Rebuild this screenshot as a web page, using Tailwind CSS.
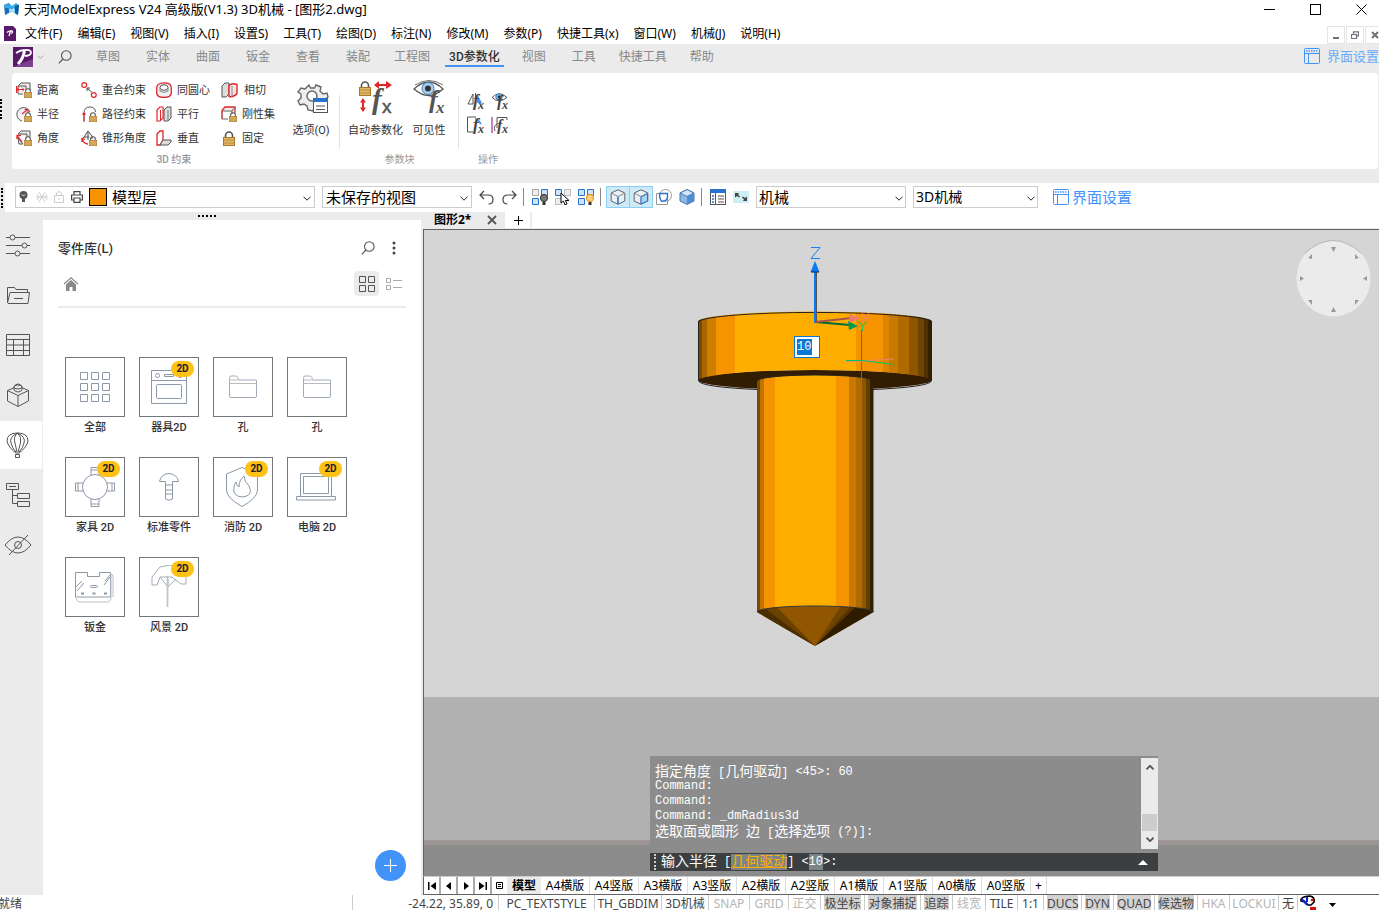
<!DOCTYPE html>
<html lang="zh-CN">
<head>
    <meta charset="UTF-8">
    <title>天河ModelExpress V24 高级版(V1.3) 3D机械 - [图形2.dwg]</title>
    <script src="https://cdn.jsdelivr.net/npm/@tailwindcss/browser@4"></script>
</head>
<body class="h-screen overflow-hidden flex flex-col bg-[#ebebeb] text-black text-xs font-['Noto_Sans','Noto_Sans_CJK_SC',sans-serif]">

<!-- Símbolos compartidos -->
<svg class="hidden">
    <symbol id="lock" viewBox="0 0 12 15">
        <path d="M2.500 7V4.500a3.500 3.500 0 0 1 7 0V7" fill="none" stroke="#555" stroke-width="1.600"/>
        <rect x="0.500" y="6.500" width="11" height="8" fill="#e3b665" stroke="#a8782c"/>
        <path d="M1 9h10M1 12h10" stroke="#b98a3f"/>
    </symbol>
    <symbol id="layout" viewBox="0 0 16 16">
        <g fill="none" stroke="#4293f8"><rect x="0.500" y="0.500" width="15" height="15" rx="1"/><path d="M0.500 5.500h15M4.500 5.500v10"/><path d="M2 3h12" stroke-width="1.500" stroke-dasharray="1.500 1"/></g>
    </symbol>
    <symbol id="search" viewBox="0 0 14 14">
        <g fill="none" stroke="#555" stroke-width="1.100"><circle cx="8.300" cy="5.500" r="4.800"/><path d="M5 9 .8 13.300"/></g>
    </symbol>
    <symbol id="chev" viewBox="0 0 8 5">
        <path d="M.5.700 4 4.200 7.500.700" fill="none" stroke="#222"/>
    </symbol>
    <symbol id="arrow" viewBox="0 0 8 5">
        <path d="M.5.700 4 4.200 7.500.700" fill="none" stroke="#555" stroke-width="1.800"/>
    </symbol>
    <symbol id="folder" viewBox="0 0 30 24">
        <g fill="none" stroke="#a3acba"><path d="M1.500 3.500V21q0 1.500 1.500 1.500h24q1.500 0 1.500-1.500V5H10V2.500Q9 .8 7.500 1H3Q1.500 1 1.500 3.500Z"/><path d="M2 8.500h26M2 5h7" stroke="#bbb"/></g>
    </symbol>
    <symbol id="box" viewBox="0 0 16 16">
        <path d="M8 .8 14.800 4v8L8 15.300 1.200 12V4Z" fill="#e8f1f5" stroke="#666"/>
        <path d="M8 8v7M1.500 4.300 8 7.500l6.500-3.200" fill="none" stroke="#888"/>
    </symbol>
</svg>

<!-- Barra de título -->
<header class="bg-white h-[22px] flex items-center pl-1 pr-3 shrink-0">
    <svg class="w-4 h-3 mr-1 -mt-1" viewBox="0 0 16 12"><path d="M0 2 5 0v10L1 12Z" fill="#1b6fb8"/><path d="M0 2 5 0l3 3 4-3 3 2-1 10-4-2V5L8 7 4 5 1 5Z" fill="#38a8e8"/><path d="m11 3 4-1-1 10-3-2Z" fill="#0c5a9c"/><path d="m5 6 3 2 3-2v4L8 9l-3 1Z" fill="#8cd0f5"/></svg>
    <h1 class="text-[13px] leading-[18px] -mt-1 whitespace-nowrap">天河ModelExpress V24 高级版(V1.3) 3D机械 - [图形2.dwg]</h1>
    <div class="ml-auto flex items-center gap-[35px] -mt-1">
        <button aria-label="最小化"><svg class="w-[11px] h-[11px]" viewBox="0 0 11 11"><path d="M0 5.500h11" stroke="#000"/></svg></button>
        <button aria-label="最大化"><svg class="w-[11px] h-[11px]" viewBox="0 0 11 11"><rect x="0.500" y="0.500" width="10" height="10" fill="none" stroke="#000"/></svg></button>
        <button aria-label="关闭"><svg class="w-[11px] h-[11px]" viewBox="0 0 11 11"><path d="m.5.500 10 10m0-10-10 10" stroke="#000"/></svg></button>
    </div>
</header>

<!-- Menú -->
<nav class="bg-white h-[22px] flex items-center pl-1 shrink-0 whitespace-nowrap overflow-hidden">
    <svg class="w-3 h-[15px] mr-[9px] shrink-0" viewBox="0 0 12 15"><path d="M0 0h9l3 3v12H0Z" fill="#571a68"/><path d="M3 6.500q2-2 5-1.500 1.500 1.500-1 2.500M6.500 5 5 10" fill="none" stroke="#fff" stroke-width="1.300"/></svg>
    <div class="flex gap-[15px] pt-0.5">
        <button>文件(F)</button>
        <button>编辑(E)</button>
        <button>视图(V)</button>
        <button>插入(I)</button>
        <button>设置S)</button>
        <button>工具(T)</button>
        <button>绘图(D)</button>
        <button>标注(N)</button>
        <button>修改(M)</button>
        <button>参数(P)</button>
        <button>快捷工具(x)</button>
        <button>窗口(W)</button>
        <button>机械(J)</button>
        <button>说明(H)</button>
    </div>
    <div class="ml-auto flex gap-px mt-1">
        <button class="w-[18px] h-[18px] border border-[#e4e4e4] flex items-center justify-center" aria-label="最小化文档"><svg class="w-2 h-2" viewBox="0 0 8 8"><path d="M1 7h6" stroke="#6d7278" stroke-width="2"/></svg></button>
        <button class="w-[18px] h-[18px] border border-[#e4e4e4] flex items-center justify-center" aria-label="还原文档"><svg class="w-2 h-2" viewBox="0 0 8 8"><path d="M2.500 3V.8h5v4H6M.5 3.500h5v4h-5Z" fill="none" stroke="#6d7278" stroke-width="1.200"/></svg></button>
        <button class="w-[14px] h-[18px] border border-r-0 border-[#e4e4e4] flex items-center justify-end" aria-label="关闭文档"><svg class="w-2 h-2" viewBox="0 0 8 8"><path d="m1 1 6 6m0-6L1 7" stroke="#6d7278" stroke-width="2"/></svg></button>
    </div>
</nav>

<!-- Pestañas de la cinta -->
<div class="h-[29px] flex items-center pl-[13px] pb-1 shrink-0 text-[#888] whitespace-nowrap">
    <svg class="w-5 h-5 shrink-0" viewBox="0 0 20 20"><rect width="20" height="20" fill="#571a68"/><path d="M0 20 20 12v8Z" fill="#7d3f91"/><path d="M3 6q4-3 9-3 6-.5 6 2.500 0 3-6 3.500" fill="none" stroke="#fff" stroke-width="1.800"/><path d="M11.500 4Q10 12 5 17" fill="none" stroke="#fff" stroke-width="3"/></svg>
    <svg class="w-[7px] h-1 ml-1 opacity-40 shrink-0"><use href="#chev"/></svg>
    <button class="mx-3.5" aria-label="搜索"><svg class="w-[14px] h-[14px] block"><use href="#search"/></svg></button>
    <div class="flex h-full pt-px -ml-[3px]">
        <button class="px-[13px]">草图</button>
        <button class="px-[13px]">实体</button>
        <button class="px-[13px]">曲面</button>
        <button class="px-[13px]">钣金</button>
        <button class="px-[13px]">查看</button>
        <button class="px-[13px]">装配</button>
        <button class="pl-[11px] pr-[10px]">工程图</button>
        <button class="px-1 mx-[5px] relative text-[#333] font-medium after:absolute after:inset-x-0 after:top-5 after:h-0.5 after:bg-[#4293f8] font-['Roboto','Noto_Sans_CJK_SC',sans-serif]">3D参数化</button>
        <button class="px-[13px]">视图</button>
        <button class="px-[13px]">工具</button>
        <button class="px-[10px]">快捷工具</button>
        <button class="px-[13px]">帮助</button>
    </div>
    <button class="ml-auto flex items-center gap-[7px] text-[13px] text-[#6aabf9]"><svg class="w-4 h-4"><use href="#layout"/></svg>界面设置</button>
</div>

<!-- Cinta -->
<section class="flex shrink-0 items-center">
    <span class="w-0.5 h-5 -mt-6 mr-2.5 border-l-2 border-dotted border-black"></span>
    <div class="flex-1 h-24 mr-px bg-white rounded flex pl-1 text-[11px] text-[#333] whitespace-nowrap font-['Roboto','Noto_Sans_CJK_SC',sans-serif]">
        <div class="w-[272px] flex flex-col pt-[5px]">
            <div class="grid grid-cols-[65px_75px_65px_64px] auto-rows-[24px] h-[72px]">
                <button class="flex items-center gap-[5px]">
                    <svg class="w-4 h-4" viewBox="0 0 16 16"><path d="M2 4 5 1h9v7M2 4h8v3M2 12h5M2 4v8" fill="#eee" stroke="#555"/><path d="M.5 4v7M1 7.500h7M3 5.500l-2 2 2 2M6 5.500l2 2-2 2" fill="none" stroke="#e0262b"/><use href="#lock" x="8" y="6" width="8" height="10"/></svg><span class="pt-0.5">距离</span></button>
                <button class="flex items-center gap-[5px]">
                    <svg class="w-4 h-4" viewBox="0 0 16 16"><g fill="#fff" stroke="#e0262b" stroke-width="1.200"><circle cx="3.200" cy="3" r="2.400"/><circle cx="12.800" cy="13" r="2.400"/></g><path d="m6 6 5 4.500M6 9V6h3" fill="none" stroke="#444"/></svg><span class="pt-0.5">重合约束</span></button>
                <button class="flex items-center gap-[5px]">
                    <svg class="w-4 h-4" viewBox="0 0 16 16"><path d="M.7 5.500Q1 1 8 .8t7.300 4.700v6q-1 4-7.300 4t-7.300-4Z" fill="#eee" stroke="#e0262b" stroke-width="1.300"/><ellipse cx="8" cy="5.500" rx="4" ry="2.800" fill="#fff" stroke="#555"/><path d="M4 6v3q4 3 8 0V6" fill="none" stroke="#888"/></svg><span class="pt-0.5">同圆心</span></button>
                <button class="flex items-center gap-[5px]">
                    <svg class="w-[18px] h-4" viewBox="0 0 18 16"><path d="M1 4 4 1h4v11l-3 3H1Z" fill="#ddd" stroke="#555"/><path d="M8 3.500Q11 .5 16 2.500v9q-3 4-8 3Z" fill="#f5e5e5" stroke="#e0262b" stroke-width="1.400"/><path d="M11 4v11" stroke="#888"/></svg><span class="pt-0.5">相切</span></button>

                <button class="flex items-center gap-[5px]">
                    <svg class="w-4 h-4" viewBox="0 0 16 16"><path d="M6 15A6.800 6.800 0 1 1 14 6" fill="#f3f3f3" stroke="#555"/><path d="m6 8 5-4M8.500 3.500H12V7" fill="none" stroke="#e0262b" stroke-width="1.200"/><use href="#lock" x="8" y="6" width="8" height="10"/></svg><span class="pt-0.5">半径</span></button>
                <button class="flex items-center gap-[5px]">
                    <svg class="w-4 h-4" viewBox="0 0 16 16"><path d="M3 15V7q0-6 6-6 5 0 5.500 5" fill="none" stroke="#555"/><path d="M3 10v6" stroke="#e0262b"/><circle cx="3" cy="8" r="1.600" fill="#e0262b"/><use href="#lock" x="8" y="6" width="8" height="10"/></svg><span class="pt-0.5">路径约束</span></button>
                <button class="flex items-center gap-[5px]">
                    <svg class="w-4 h-4" viewBox="0 0 16 16"><path d="M1 4 4 1h3v11l-3 3H1Z" fill="#fff" stroke="#e0262b" stroke-width="1.200"/><path d="M4.500 4v10" stroke="#e0262b"/><path d="M8 4l3-3h4v11l-3 3H8Z" fill="#ddd" stroke="#555"/><path d="M12 4v10" stroke="#777"/></svg><span class="pt-0.5">平行</span></button>
                <button class="flex items-center gap-[5px]">
                    <svg class="w-4 h-4" viewBox="0 0 16 16"><path d="M1 4.500 4 1h10v6" fill="#eee" stroke="#e0262b" stroke-width="1.300"/><path d="M1 5h10v3M1 5v8h6M11 5l3-4" fill="none" stroke="#666"/><path d="M1 4v9" stroke="#e0262b"/><use href="#lock" x="8" y="6" width="8" height="10"/></svg><span class="pt-0.5">刚性集</span></button>

                <button class="flex items-center gap-[5px]">
                    <svg class="w-4 h-4" viewBox="0 0 16 16"><path d="M2 4 5 1h9v6M2 4h9v3M3 14h4L2 8Z" fill="#eee" stroke="#555"/><path d="m1 6 5 6M1 9V5.500h4" fill="none" stroke="#e0262b" stroke-width="1.300"/><use href="#lock" x="8" y="6" width="8" height="10"/></svg><span class="pt-0.5">角度</span></button>
                <button class="flex items-center gap-[5px]">
                    <svg class="w-4 h-4" viewBox="0 0 16 16"><path d="M1 10 7 1l4 5v3M3 7h5M7 1v9" fill="#eee" stroke="#555"/><path d="M1 9q2 5 6 5M1 12V8.500l3 1" fill="none" stroke="#e0262b" stroke-width="1.300"/><use href="#lock" x="8" y="6" width="8" height="10"/></svg><span class="pt-0.5">锥形角度</span></button>
                <button class="flex items-center gap-[5px]">
                    <svg class="w-4 h-4" viewBox="0 0 16 16"><path d="M1 4 4 1h3v9l-3 5H1Z" fill="#fff" stroke="#e0262b" stroke-width="1.300"/><path d="M4 15l3-5h8v2l-3 3Z" fill="#ddd" stroke="#555"/></svg><span class="pt-0.5">垂直</span></button>
                <button class="flex items-center gap-[5px]">
                    <svg class="w-4 h-[15px]"><use href="#lock"/></svg><span class="pt-0.5">固定</span></button>
            </div>
            <p class="mt-0.5 pl-11 text-center text-[10px] leading-4 font-medium text-[#999]">3D 约束</p>
        </div>
        <button class="w-[46px] flex flex-col items-center pt-[10px] gap-2">
            <svg class="w-8 h-8 ml-1" viewBox="0 0 32 32"><path d="m12 2 1.500 3h4L19 2l5 2-1 4 3 3 4-1 1 4-4 3-2 6-4-1-4 3-1 3-5-1-1-4-3-2-4 1-2-4 3-3v-4L1 9l3-4 4 1Z" fill="#eee" stroke="#666" stroke-width="1.400"/><circle cx="15" cy="13" r="5" fill="#fff" stroke="#666" stroke-width="1.400"/><rect x="16.500" y="15.500" width="14" height="14" fill="#fff" stroke="#555"/><path d="M16 15h15v4H16Z" fill="#2672cd"/><path d="M19 23h9M19 26.500h9" stroke="#555"/></svg>
            <span class="pt-px">选项(O)</span>
        </button>
        <span class="w-px h-[54px] mt-[22px] mx-[5px] bg-[#e3e3e3]"></span>
        <div class="w-[109px] flex flex-col">
            <div class="flex gap-2 pl-[3px] pt-[7px] h-[77px]">
                <button class="flex flex-col items-center gap-[7px]">
                    <svg class="w-9 h-[37px]" viewBox="0 0 36 37"><use href="#lock" x="1" y="1" width="12" height="15"/><g fill="#e0262b"><path d="m16 5 5-4v3h7V1l6 4-6 4V6h-7v3ZM5 18l3 4.500H6v5h2L5 32l-3-4.500h2v-5H2Z"/></g><text x="14" y="29" font-family="Liberation Serif" font-style="italic" font-weight="bold" font-size="29" fill="#555">f</text><text x="24" y="33" font-family="Liberation Sans" font-size="19" stroke="#555" stroke-width="0.500" fill="#555">x</text></svg>
                    <span>自动参数化</span>
                </button>
                <button class="flex flex-col items-center gap-[7px]">
                    <svg class="w-9 h-[37px]" viewBox="0 0 36 37"><path d="M3 9Q18-5 32 9 18 22 3 9Z" fill="#fff" stroke="#555" stroke-width="1.300"/><path d="M4 5Q18-4 32 5" fill="none" stroke="#777"/><circle cx="17" cy="8.500" r="6" fill="#a9cff0" stroke="#3b7fc1"/><circle cx="17" cy="8.500" r="3" fill="#333"/><text x="18" y="28" font-family="Liberation Serif" font-style="italic" font-weight="bold" font-size="26" fill="#555">f</text><text x="25" y="33" font-family="Liberation Serif" font-style="italic" font-weight="bold" font-size="17" fill="#555">x</text></svg>
                    <span>可见性</span>
                </button>
            </div>
            <p class="text-center text-[10px] leading-4 mt-0.5 text-[#999]">参数块</p>
        </div>
        <span class="w-px h-[54px] mt-[22px] mx-1 bg-[#e3e3e3]"></span>
        <div class="flex flex-col pl-1">
            <div class="grid grid-cols-[24px_18px] gap-y-1.5 h-[77px] pt-[19px] auto-rows-[18px]">
                <button aria-label="镜像参数"><svg class="w-[18px] h-[18px]" viewBox="0 0 18 18"><path d="M1 12 6 2v10Z" fill="#fff" stroke="#555"/><path d="M8.500 1v12" stroke="#555"/><path d="m10 2 5 9h-5Z" fill="#4293f8"/><text x="6" y="14" font-family="Liberation Serif" font-style="italic" font-weight="bold" font-size="17" fill="#444">f</text><text x="11" y="17" font-family="Liberation Serif" font-style="italic" font-weight="bold" font-size="12" fill="#444">x</text></svg></button>
                <button aria-label="参数可见性"><svg class="w-[18px] h-[18px]" viewBox="0 0 18 18"><path d="M1 5.500Q8-2 16 5.500 8 12 1 5.500Z" fill="#fff" stroke="#555"/><circle cx="8" cy="5" r="3.200" fill="#8fc0ec" stroke="#3b7fc1"/><circle cx="8" cy="5" r="1.400" fill="#333"/><text x="6" y="15" font-family="Liberation Serif" font-style="italic" font-weight="bold" font-size="16" fill="#444">f</text><text x="11" y="17" font-family="Liberation Serif" font-style="italic" font-weight="bold" font-size="12" fill="#444">x</text></svg></button>
                <button aria-label="拉伸参数"><svg class="w-[18px] h-[18px]" viewBox="0 0 18 18"><path d="M9 1H.5v15H6" fill="none" stroke="#555"/><path d="M8.500 2v12" stroke="#4293f8" stroke-dasharray="1.500 1.500"/><path d="m10 3 4 5" stroke="#4293f8" stroke-width="2"/><text x="6" y="14" font-family="Liberation Serif" font-style="italic" font-weight="bold" font-size="17" fill="#444">f</text><text x="11" y="17" font-family="Liberation Serif" font-style="italic" font-weight="bold" font-size="12" fill="#444">x</text></svg></button>
                <button aria-label="旋转参数"><svg class="w-[18px] h-[18px]" viewBox="0 0 18 18"><path d="M1 1v16" stroke="#a3419f" stroke-width="1.300"/><path d="M6 12V1.500h10V4M4 15q-2-5 2-7" fill="none" stroke="#555"/><text x="6" y="15" font-family="Liberation Serif" font-style="italic" font-weight="bold" font-size="16" fill="#444">f</text><text x="11" y="17" font-family="Liberation Serif" font-style="italic" font-weight="bold" font-size="12" fill="#444">x</text></svg></button>
            </div>
            <p class="text-center text-[10px] leading-4 mt-0.5 text-[#999]">操作</p>
        </div>
    </div>
</section>

<!-- Barra de herramientas -->
<section class="mt-3.5 h-[29px] shrink-0 flex">
    <span class="w-[5px] flex items-center"><span class="ml-px h-5 border-l-2 border-dotted border-black"></span></span>
    <div class="flex-1 bg-white flex items-center pl-2.5 pb-px text-[15px] font-['Noto_Sans','Noto_Sans_CJK_SC',sans-serif]">
        <div class="relative w-[300px] h-[22px] border border-[#ccc] flex items-center pl-[3px]">
            <svg class="w-[9px] h-3" viewBox="0 0 9 12"><circle cx="4.500" cy="4" r="4" fill="#555"/><path d="M3 7h3v4H3Z" fill="#555"/><path d="M3 3.500 4.500 5 6 3.500" stroke="#fff" fill="none"/></svg>
            <svg class="w-3 h-3 ml-2" viewBox="0 0 12 12"><path d="M0 6h12M3 1l6 10M9 1 3 11M1 3l2 3-2 3M11 3 9 6l2 3" fill="none" stroke="#ccc"/></svg>
            <svg class="w-[10px] h-3 ml-1.5" viewBox="0 0 10 12"><path d="M.5 4.500h9v7h-9ZM2.500 4.500V2q2.500-3 5 0v2.500M5 7v2" fill="none" stroke="#ccc"/></svg>
            <svg class="w-3 h-3 ml-[7px]" viewBox="0 0 12 12"><path d="M3 4V.6h6V4M3 9H.6V4h10.800v5H9M3 7h6v4.400H3Z" fill="none" stroke="#444" stroke-width="1.200"/></svg>
            <span class="ml-1.5 w-[18px] h-[18px] bg-[#f59300] border border-black"></span>
            <select aria-label="图层" class="appearance-none flex-1 h-full pl-[5px] pb-0.5 bg-transparent outline-none"><option>模型层</option></select>
            <svg class="absolute right-[3px] top-[9px] w-2 h-[5px] pointer-events-none"><use href="#chev"/></svg>
        </div>
        <div class="relative ml-[7px] w-[150px] h-[22px]">
            <select aria-label="视图" class="appearance-none w-full h-full border border-[#ccc] pl-[3px] pb-0.5 bg-white outline-none"><option>未保存的视图</option></select>
            <svg class="absolute right-1 top-2.5 w-2 h-[5px] pointer-events-none"><use href="#chev"/></svg>
        </div>
        <div class="flex items-center gap-2 ml-[7px]">
            <button aria-label="撤销"><svg class="w-[15px] h-4 block" viewBox="0 0 15 16"><path d="M5 2 1 6l4 4M1 6h8q5 0 5 4.500T9.500 15" fill="none" stroke="#444" stroke-width="1.200"/></svg></button>
            <button aria-label="重做"><svg class="w-[15px] h-4 block" viewBox="0 0 15 16"><path d="m10 2 4 4-4 4M14 6H6Q1 6 1 10.500T5.500 15" fill="none" stroke="#444" stroke-width="1.200"/></svg></button>
        </div>
        <span class="w-px h-[18px] ml-1.5 mr-2 bg-[#888]"></span>
        <div class="flex items-center gap-[7px]">
            <button aria-label="隐藏实体"><svg class="w-4 h-4 block" viewBox="0 0 16 16"><rect x="0.500" y="0.500" width="6" height="6" fill="#eee" stroke="#aaa"/><path d="M9.500.500h6v6h-6ZM.500 9.500h6v6h-6Z" fill="#cfe3f8" stroke="#2672cd"/><circle cx="12" cy="9" r="3.600" fill="#777" stroke="#333"/><path d="M10.500 13h3v3h-3Z" fill="#333"/></svg></button>
            <button aria-label="选择显示"><svg class="w-4 h-4 block" viewBox="0 0 16 16"><path d="M.500.500h6v6h-6Z" fill="#cfe3f8" stroke="#2672cd"/><path d="M9.500.500h6v6h-6ZM.500 9.500h6v6h-6Z" fill="#eee" stroke="#bbb"/><path d="M6 4v10l2.500-2 1.500 4 2-1-1.500-3.500H14Z" fill="#fff" stroke="#000"/></svg></button>
            <button aria-label="显示全部"><svg class="w-4 h-4 block" viewBox="0 0 16 16"><path d="M.500.500h6v6h-6ZM9.500.500h6v6h-6ZM.500 9.500h6v6h-6Z" fill="#cfe3f8" stroke="#2672cd"/><circle cx="12" cy="9" r="3.600" fill="#ffd27a" stroke="#d98a12"/><path d="M10.500 13h3v3h-3Z" fill="#333"/></svg></button>
        </div>
        <span class="w-px h-[18px] ml-1.5 mr-[5px] bg-[#888]"></span>
        <button class="w-6 h-[22px] bg-[#cdeaf8] border border-[#8ccdf2] flex items-center justify-center" aria-label="线框"><svg class="w-4 h-4" viewBox="0 0 16 16"><use href="#box" width="16" height="16"/><path d="M8 8v7" stroke="#2672cd" stroke-width="1.300"/></svg></button>
        <button class="w-6 h-[22px] -ml-px bg-[#cdeaf8] border border-[#8ccdf2] flex items-center justify-center" aria-label="边着色"><svg class="w-4 h-4" viewBox="0 0 16 16"><use href="#box" width="16" height="16"/><path d="m8 8 6.500-3.500V12L8 15Z" fill="#a9d2f5" stroke="#2672cd"/></svg></button>
        <button class="ml-[3px]" aria-label="隐藏线"><svg class="w-4 h-4 block" viewBox="0 0 16 16"><circle cx="9.500" cy="6.500" r="6" fill="#fff" stroke="#999"/><path d="M.500 4.500h11v11H.500Z" fill="none" stroke="#999"/><path d="M3.500 4.500h8V9q-2 4-6 3-2-2-2-7.500Z" fill="#fff" stroke="#2672cd" stroke-width="1.400"/></svg></button>
        <button class="ml-[7px]" aria-label="着色"><svg class="w-4 h-4 block" viewBox="0 0 16 16"><path d="M8 .5 15 4v8l-7 3.500L1 12V4Z" fill="#8db9e4" stroke="#4478b0"/><path d="M8 .5 15 4 8 7.500 1 4Z" fill="#d2e6f8" stroke="#4478b0"/><path d="M8 7.500 15 4v8l-7 3.500Z" fill="#4f8dd0"/></svg></button>
        <span class="w-px h-[18px] ml-1.5 mr-2 bg-[#888]"></span>
        <button aria-label="属性面板"><svg class="w-4 h-4 block" viewBox="0 0 16 16"><rect x="0.500" y="0.500" width="15" height="15" fill="#fff" stroke="#555"/><path d="M0 0h16v4H0Z" fill="#2672cd"/><path d="M5.500 4v12M8 7h6M8 10h6M8 13h6" stroke="#555"/><path d="M3 6v9" stroke="#2672cd" stroke-width="1.500" stroke-dasharray="2 1"/></svg></button>
        <button class="ml-[7px] w-4 h-3 bg-[#cdeef5]" aria-label="全屏"><svg class="w-4 h-3 block" viewBox="0 0 16 12"><path d="M2 2h4L5 3.500 7 5.500 6 6.500 4 5 2 6.500ZM14 10h-4l1-1.500-2-2L10 5.500 12 7l2-1.500Z" fill="#444"/></svg></button>
        <div class="relative ml-[7px] w-[150px] h-[22px]">
            <select aria-label="工作空间" class="appearance-none w-full h-full border border-[#ccc] pl-0.5 pb-0.5 bg-white outline-none"><option>机械</option></select>
            <svg class="absolute right-[3px] top-2.5 w-2 h-[5px] pointer-events-none"><use href="#chev"/></svg>
        </div>
        <div class="relative ml-[7px] w-[125px] h-[22px]">
            <select aria-label="界面" class="appearance-none w-full h-full border border-[#ccc] pl-0.5 bg-white outline-none text-sm"><option>3D机械</option></select>
            <svg class="absolute right-[3px] top-2.5 w-2 h-[5px] pointer-events-none"><use href="#chev"/></svg>
        </div>
        <button class="ml-[15px] flex items-center gap-[3px] text-[#4293f8]"><svg class="w-4 h-4"><use href="#layout"/></svg>界面设置</button>
    </div>
</section>

<div class="flex-1 flex min-h-0">
    <!-- Barra lateral -->
    <aside class="w-[43px] shrink-0 pt-2 flex flex-col">
        <button class="h-[50px] pl-1.5" aria-label="参数"><svg class="w-6 h-6" viewBox="0 0 24 24"><g fill="#ebebeb" stroke="#555"><path d="M0 4.500h24M0 12.500h24M0 20.500h24"/><circle cx="6.500" cy="4.500" r="2.500"/><circle cx="18.500" cy="12.500" r="2.500"/><circle cx="11.500" cy="20.500" r="2.500"/></g></svg></button>
        <button class="h-[50px] pl-1.5" aria-label="文件夹"><svg class="w-6 h-6" viewBox="0 0 24 24"><path d="M1.500 20V4.500h7l1.500 2h11.500V9M1.500 20 4 9.500h19.500L22 20.500H2M8 15.500h9" fill="none" stroke="#555"/></svg></button>
        <button class="h-[50px] pl-1.5" aria-label="表格"><svg class="w-6 h-6" viewBox="0 0 24 24"><path d="M.500 1.500h23v21H.500ZM.500 6.500h23M.500 12h23M.500 17.500h23M7.500 6.500v16M17.500 6.500v16" fill="none" stroke="#555"/></svg></button>
        <button class="h-[50px] pl-1.5" aria-label="实体"><svg class="w-6 h-6" viewBox="0 0 24 24"><path d="m12 3 10.500 4.500v10.500L12 23.500 1.500 18V7.500ZM1.500 7.500 12 12.500l10.500-5M12 12.500v11" fill="none" stroke="#555"/><path d="M8 3.500q4-5 8 0v3.500q-4 4-8 0Z" fill="#ebebeb" stroke="#555"/><ellipse cx="12" cy="4" rx="4" ry="2" fill="none" stroke="#555"/></svg></button>
        <button class="h-12 my-px w-[42px] pl-1.5 bg-white" aria-label="零件库"><svg class="w-6 h-[26px]" viewBox="0 0 24 26"><path d="M11.500 1Q22 1 22 9q-1 6-9 12h-3Q2 15 1 9 1 1 11.500 1ZM11.500 1Q3 5 5 11q1 5 5 9M11.500 1Q20 5 18 11q-1 5-5 9M11.500 1Q7 5 9 11l2 9M11.500 1Q16 5 14.500 11L12 20M9.500 22.500h4v3h-4Z" fill="none" stroke="#555"/></svg></button>
        <button class="h-[50px] pl-1.5" aria-label="结构树"><svg class="w-6 h-6" viewBox="0 0 24 24"><path d="M.500.500h12v6H.500ZM3 3.500h7M6.500 6.500v14h5M6.500 12.500h5M11.500 10.500h12v5h-12ZM11.500 18.500h12v5h-12Z" fill="none" stroke="#555"/></svg></button>
        <button class="h-[50px] pl-1" aria-label="隐藏"><svg class="w-7 h-6" viewBox="0 0 28 24"><path d="M1 12Q14-4 27 12 14 28 1 12ZM24 2 5 22" fill="none" stroke="#555"/><circle cx="14" cy="12" r="3.500" fill="none" stroke="#555"/></svg></button>
    </aside>

    <!-- Biblioteca de piezas -->
    <section class="w-[378px] shrink-0 flex flex-col text-[#333] font-['Roboto','Noto_Sans_CJK_SC',sans-serif]">
        <div class="h-2 pl-[155px] flex items-center"><span class="w-[18px] border-t-2 border-dotted border-black"></span></div>
        <div class="relative flex-1 bg-white px-[15px] pt-4">
            <div class="flex items-center h-6">
                <h2 class="text-[13px] font-medium pt-0.5">零件库(L)</h2>
                <button class="ml-auto" aria-label="搜索零件"><svg class="w-[14px] h-[14px] block"><use href="#search"/></svg></button>
                <button class="ml-[17px] mr-2.5" aria-label="更多"><svg class="w-1 h-[14px] block" viewBox="0 0 4 14"><g fill="#444"><circle cx="2" cy="2" r="1.500"/><circle cx="2" cy="7" r="1.500"/><circle cx="2" cy="12" r="1.500"/></g></svg></button>
            </div>
            <div class="flex items-center h-[25px] mt-[11px] pl-1.5">
                <button aria-label="主页"><svg class="w-[14px] h-[14px]" viewBox="0 0 14 14"><path d="M0 7 7 .8 14 7" fill="none" stroke="#888" stroke-width="1.200"/><path d="m7 3 5 4.500V14H8.500v-4h-3v4H2V7.500Z" fill="#888"/></svg></button>
                <button class="ml-auto w-[25px] h-[25px] rounded bg-[#ebebeb] flex items-center justify-center" aria-label="网格视图"><svg class="w-4 h-4" viewBox="0 0 16 16"><path d="M.500.500h6v6h-6ZM9.500.500h6v6h-6ZM.500 9.500h6v6h-6ZM9.500 9.500h6v6h-6Z" fill="none" stroke="#555"/></svg></button>
                <button class="ml-[7px] mr-1" aria-label="列表视图"><svg class="w-4 h-3 block" viewBox="0 0 16 12"><path d="M.500.500h4v4h-4ZM.500 7.500h4v4h-4ZM7 2.500h9M7 9.500h9" fill="none" stroke="#aaa"/></svg></button>
            </div>
            <hr class="mt-2.5 border-t-2 border-[#ebebeb]">

            <ul class="mt-[49px] ml-[7px] grid grid-cols-[repeat(4,60px)] gap-x-3.5 auto-rows-[100px] text-[11px] leading-[22px] text-center whitespace-nowrap font-medium">
                <li><button class="w-[60px]"><span class="h-[60px] border border-[#72777f] flex items-center justify-center"><svg class="w-8 h-8" viewBox="0 0 32 32"><path d="M1.500 1.500h7v7h-7ZM12.500 1.500h7v7h-7ZM23.500 1.500h7v7h-7ZM1.500 12.500h7v7h-7ZM12.500 12.500h7v7h-7ZM23.500 12.500h7v7h-7ZM1.500 23.500h7v7h-7ZM12.500 23.500h7v7h-7ZM23.500 23.500h7v7h-7Z" fill="none" stroke="#8c97a8"/></svg></span>全部</button></li>
                <li><button class="relative w-[60px]"><span class="h-[60px] border border-[#72777f] flex items-center justify-center"><svg class="w-9 h-9" viewBox="0 0 36 36"><g fill="none" stroke="#8c97a8"><path d="M.500 1.500h35v33H.500ZM.500 11.500h35M13.500 5.500h9v2h-9Z"/><circle cx="6.500" cy="6.500" r="2"/><circle cx="29" cy="6.500" r="2"/><rect x="5.500" y="15.500" width="25" height="14" rx="1"/></g></svg></span>器具2D<span class="absolute right-[5px] top-1 w-[23px] h-4 rounded-full bg-[#ffc115] text-[10px] leading-4 font-bold text-[#222]">2D</span></button></li>
                <li><button class="w-[60px]"><span class="h-[60px] border border-[#72777f] flex items-center justify-center"><svg class="w-[30px] h-6"><use href="#folder"/></svg></span>孔</button></li>
                <li><button class="w-[60px]"><span class="h-[60px] border border-[#72777f] flex items-center justify-center"><svg class="w-[30px] h-6"><use href="#folder"/></svg></span>孔</button></li>
                <li><button class="relative w-[60px]"><span class="h-[60px] border border-[#72777f] flex items-center justify-center"><svg class="w-10 h-10" viewBox="0 0 40 40"><g fill="none" stroke="#8c97a8"><circle cx="20" cy="20" r="12.500"/><path d="M16 8V.500h8V8M16 3h8M16 32v7.500h8V32M16 37h8M8 16H.500v8H8M3 16v8M32 16h7.500v8H32M37 16v8"/></g></svg></span>家具 2D<span class="absolute right-[5px] top-1 w-[23px] h-4 rounded-full bg-[#ffc115] text-[10px] leading-4 font-bold text-[#222]">2D</span></button></li>
                <li><button class="w-[60px]"><span class="h-[60px] border border-[#72777f] flex items-center justify-center"><svg class="w-5 h-7" viewBox="0 0 20 28"><path d="M.500 8.500q1.500-7.500 9.500-8 8 .5 9.500 8h-6V26q-3.500 2.500-7 0V8.500ZM7 12h6M7 17h6M7 21h6" fill="none" stroke="#8c97a8"/></svg></span>标准零件</button></li>
                <li><button class="relative w-[60px]"><span class="h-[60px] border border-[#72777f] flex items-center justify-center pr-0.5"><svg class="w-8 h-10" viewBox="0 0 32 40"><path d="M16 .500 31.500 7v16q0 8-15.500 16.500Q.500 31 .500 23V7ZM18 9q0 5 5 10 5 10-7 11-10-1-8-10 1-4 2-5 0 3 3 5 0-7 5-11Z" fill="none" stroke="#8c97a8"/></svg></span>消防 2D<span class="absolute right-[5px] top-1 w-[23px] h-4 rounded-full bg-[#ffc115] text-[10px] leading-4 font-bold text-[#222]">2D</span></button></li>
                <li><button class="relative w-[60px]"><span class="h-[60px] border border-[#72777f] flex items-center justify-center pr-0.5"><svg class="w-10 h-7" viewBox="0 0 40 28"><path d="M4.500 23.500V.500h31v23M7.500 3.500h25v17h-25ZM.500 23.500h39v3.500H.500Z" fill="none" stroke="#8c97a8"/></svg></span>电脑 2D<span class="absolute right-[5px] top-1 w-[23px] h-4 rounded-full bg-[#ffc115] text-[10px] leading-4 font-bold text-[#222]">2D</span></button></li>
                <li><button class="w-[60px]"><span class="h-[60px] border border-[#72777f] flex items-center justify-center pr-0.5"><svg class="w-10 h-8" viewBox="0 0 40 32"><g fill="none" stroke="#8c97a8"><path d="M1.500 26V1.500h12v4h12v-4h11V26ZM2 16l6-6M3 20l7-8M31 10l5-6M30 14l6-8"/><path d="M2 27q1 4 4 4h27q4 0 4-5V3q2 0 2 3v20" stroke="#bbc2cc"/><rect x="16.500" y="14.500" width="7" height="2" rx="1"/><path d="M7 22.500h3M18.500 22.500h3M30 22.500h3" stroke-width="2"/></g></svg></span>钣金</button></li>
                <li><button class="relative w-[60px]"><span class="h-[60px] border border-[#72777f] flex items-center justify-center"><svg class="w-9 h-11" viewBox="0 0 36 44"><path d="M1 20v-8L9 2l10-2 12 4 4 8v7h-5l-9-7H9l-3 8ZM9 12l8 10 8-8M17 22v-8" fill="none" stroke="#a3acba"/><path d="M16.500 11v31" stroke="#c4c4c4" stroke-width="1.800"/></svg></span>风景 2D<span class="absolute right-[5px] top-1 w-[23px] h-4 rounded-full bg-[#ffc115] text-[10px] leading-4 font-bold text-[#222]">2D</span></button></li>
            </ul>

            <button class="absolute right-[15px] bottom-[14px] w-[31px] h-[31px] rounded-full bg-[#4293f8] flex items-center justify-center" aria-label="添加"><svg class="w-[13px] h-[13px]" viewBox="0 0 13 13"><path d="M6.500 0v13M0 6.500h13" stroke="#fff"/></svg></button>
        </div>
    </section>

    <!-- Área de dibujo -->
    <main class="flex-1 min-w-0 ml-0.5 flex flex-col">
        <div class="h-[17px] shrink-0 flex bg-white text-xs border-b border-[#ebebeb]">
            <div class="w-[82px] bg-[#ebebeb] flex items-center pl-[11px] font-bold">图形2*
                <button class="ml-auto mr-2" aria-label="关闭图形"><svg class="w-[10px] h-[10px] block" viewBox="0 0 10 10"><path d="m1 1 8 8m0-8L1 9" stroke="#555" stroke-width="1.800"/></svg></button>
            </div>
            <button class="w-[27px] border-r-2 border-[#ebebeb] flex items-center justify-center pl-0.5" aria-label="新建图形"><svg class="w-[9px] h-[9px]" viewBox="0 0 9 9"><path d="M4.500 0v9M0 4.500h9" stroke="#000"/></svg></button>
        </div>

        <div class="relative flex-1 min-h-0 overflow-hidden border-l border-t border-[#636363] flex flex-col bg-[#d5d5d5]">
            <div class="mt-auto h-[143px] bg-[#b1b1b1]"></div>
            <div class="h-[5px] bg-[#9d9494]"></div>
            <div class="h-[31px] bg-[#8c8c8c]"></div>

            <!-- Modelo -->
            <svg class="absolute left-0 top-0 w-[955px] h-[646px]" viewBox="424 230 955 646">
                <defs>
                    <clipPath id="head"><path d="M698 321.500A117 10 0 0 1 932 321.500V381A117 11 0 0 0 698 381Z"/></clipPath>
                    <clipPath id="shank"><path d="M757 381A58 6 0 0 1 873.500 381V612A58 6 0 0 0 757 612Z"/></clipPath>
                    <clipPath id="cone"><path d="M757 612A58 6 0 0 1 873.500 612L815 646Z"/></clipPath>
                </defs>
                <ellipse cx="815" cy="380" rx="117" ry="10" fill="#331d00"/>
                <g clip-path="url(#head)">
                    <path d="M698 300h5v90h-5z" fill="#7d4b00"/>
                    <path d="M702 300h6v90h-6z" fill="#a86600"/>
                    <path d="M707 300h9v90h-9z" fill="#d07e00"/>
                    <path d="M716 300h19v90h-19z" fill="#f59300"/>
                    <path d="M735 300h121v90H735z" fill="#ffae00"/>
                    <path d="M856 300h27v90h-27z" fill="#f59300"/>
                    <path d="M883 300h6v90h-6z" fill="#dc8500"/>
                    <path d="M889 300h9v90h-9z" fill="#c87900"/>
                    <path d="M898 300h11v90h-11z" fill="#b16a00"/>
                    <path d="M909 300h9v90h-9z" fill="#8f5600"/>
                    <path d="M918 300h6v90h-6z" fill="#704300"/>
                    <path d="M924 300h4v90h-4z" fill="#503000"/>
                    <path d="M928 300h4v90h-4z" fill="#332000"/>
                </g>
                <path d="M698.500 321.500A117 10 0 0 1 931.500 321.500M698.500 321v60q3 6 59 8.500M931.500 321v60q-3 6-59 8.500" fill="none" stroke="#222"/>
                <g clip-path="url(#shank)">
                    <path d="M757 370h4v250h-4z" fill="#7d4b00"/>
                    <path d="M760 370h5v250h-5z" fill="#c07400"/>
                    <path d="M764 370h11v250h-11z" fill="#f59300"/>
                    <path d="M775 370h61v250h-61z" fill="#ffae00"/>
                    <path d="M836 370h13v250h-13z" fill="#f59300"/>
                    <path d="M849 370h7v250h-7z" fill="#c87900"/>
                    <path d="M856 370h6v250h-6z" fill="#b16a00"/>
                    <path d="M862 370h5v250h-5z" fill="#8f5600"/>
                    <path d="M866 370h4v250h-4z" fill="#604000"/>
                    <path d="M870 370h4v250h-4z" fill="#332000"/>
                </g>
                <path d="M757 381A58 6 0 0 1 873.500 381" fill="none" stroke="#222"/>
                <g clip-path="url(#cone)">
                    <path d="M750 600h130v50H750z" fill="#905700"/>
                    <path d="M750 600h20l45 46-65-30z" fill="#6b4100"/>
                    <path d="m750 610 65 36-52-39z" fill="#4a2d00"/>
                    <path d="M841 606h12l-38 40z" fill="#704300"/>
                    <path d="M853 604h10l-48 42z" fill="#583500"/>
                    <path d="M863 600h20v12l-68 34z" fill="#2e1b00"/>
                </g>
                <path d="M757 612A58 6 0 0 1 873.500 612" fill="none" stroke="#333"/>

                <!-- Ejes -->
                <path d="M816.500 272v49" stroke="#555"/>
                <path d="M815 270v53" stroke="#087af5" stroke-width="2"/>
                <path d="m815 261 4.500 11h-9z" fill="#087af5"/><path d="M811 272h8" stroke="#222"/>
                <path d="M815.500 322 850 325" stroke="#006b35" stroke-width="2"/><path d="m848 321 10 5-9 4z" fill="#009a50"/>
                <path d="m815.500 322 36-4" stroke="#a8524a" stroke-width="2"/><path d="m849 314 11 4-10 5z" fill="#ef7a72"/>
                <g fill="none"><path d="M811 247.500h9l-9 11h9" stroke="#1a82f0"/><path d="m862 313 7 9m0-9-7 9" stroke="#ff8070"/><path d="m858.500 321 4 5 4-5m-4 5v5" stroke="#20c050"/><path d="M861.500 330v48" stroke="#2672cd"/><path d="m846 362 48-3" stroke="#f08070"/><path d="m846 360.500 16 0 32 4" stroke="#00c860"/></g>
            </svg>

            <label class="absolute left-[370px] top-[106px] w-[26px] h-[22px] bg-white border border-[#0a78d4] pl-0.5 pt-0.5"><input aria-label="半径" value="10" class="block w-[15px] h-4 bg-[#0a78d4] text-white text-xs leading-4 font-['Liberation_Mono',monospace] outline-none"></label>

            <svg class="absolute right-2 top-2.5 w-[75px] h-[77px]" viewBox="0 0 75 77">
                <ellipse cx="37.500" cy="38.500" rx="37" ry="38" fill="#ebebeb"/>
                <path d="M9 13Q37-12 65 13" fill="none" stroke="#b5b5b5"/>
                <g fill="#999"><path d="M35 7h5l-2.500 5zM35 72h5l-2.500-5zM4 36v5l4-2.500zM71 36v5l-4-2.500zM12 18l4-4v5zM63 18l-4-4v5zM12 60h4v5zM63 60h-4v5z"/></g>
            </svg>

            <!-- Línea de comandos -->
            <div class="absolute left-[226px] bottom-[5px] w-[508px] text-white text-xs font-['Liberation_Mono','Noto_Sans_CJK_SC',monospace]">
                <div class="flex h-[97px] bg-[#8c8c8c] pt-0.5 pb-1">
                    <div class="flex-1 pl-[5px] pt-1.5 whitespace-nowrap">
                        <p class="h-[15px] flex items-center gap-[7px]"><span class="text-sm">指定角度</span><span>[<span class="text-sm">几何驱动</span>]</span><span>&lt;45&gt;:</span><span>60</span></p>
                        <p class="h-[15px] leading-[15px]">Command:</p>
                        <p class="h-[15px] leading-[15px]">Command:</p>
                        <p class="h-[15px] leading-[15px]">Command: _dmRadius3d</p>
                        <p class="h-[15px] flex items-center gap-[7px]"><span class="text-sm">选取面或圆形</span><span class="text-sm">边</span><span>[<span class="text-sm">选择选项</span></span><span>(?)]:</span></p>
                    </div>
                    <div class="w-[17px] bg-[#ebebeb] flex flex-col items-center py-[7px]">
                        <svg class="w-2 h-[5px] rotate-180"><use href="#arrow"/></svg>
                        <span class="mt-auto mb-[6px] w-[15px] h-[17px] bg-[#cdcdcd]"></span>
                        <svg class="w-2 h-[5px]"><use href="#arrow"/></svg>
                    </div>
                </div>
                <div class="h-[18px] bg-[#3c3f41] flex items-center gap-[7px] pl-1 pr-2.5 whitespace-nowrap">
                    <span class="h-4 -mr-0.5 border-l-2 border-dotted border-[#ccc]"></span>
                    <label for="cmd" class="text-sm leading-4">输入半径</label>
                    <span class="flex items-center">[<button class="bg-[#7b8489] text-[#ffae00] text-sm leading-4 underline">几何驱动</button>]</span>
                    <span class="flex items-center">&lt;<button class="bg-[#7b8489] leading-4">10</button>&gt;:</span>
                    <input id="cmd" class="flex-1 min-w-0 h-4 bg-transparent outline-none">
                    <svg class="w-2.5 h-[5px]" viewBox="0 0 10 5"><path d="m5 0 5 5H0z" fill="#fff"/></svg>
                </div>
            </div>
        </div>

        <!-- Presentaciones -->
        <div class="h-[19px] shrink-0 flex bg-white border-t border-b border-l border-[#636363] border-t-[#ccc] leading-4 whitespace-nowrap overflow-hidden">
            <button class="w-[17px] border-r-2 border-[#aaa] flex items-center justify-center" aria-label="第一个"><svg class="w-2 h-2" viewBox="0 0 8 8"><path d="M0 0h1.500v8H0zM8 0v8L2.500 4z"/></svg></button>
            <button class="w-[17px] border-r-2 border-[#aaa] flex items-center justify-center" aria-label="上一个"><svg class="w-2 h-2" viewBox="0 0 8 8"><path d="M6 0v8L1 4z"/></svg></button>
            <button class="w-[17px] border-r-2 border-[#aaa] flex items-center justify-center" aria-label="下一个"><svg class="w-2 h-2" viewBox="0 0 8 8"><path d="M2 0v8l5-4z"/></svg></button>
            <button class="w-[17px] border-r-2 border-[#aaa] flex items-center justify-center" aria-label="最后一个"><svg class="w-2 h-2" viewBox="0 0 8 8"><path d="M8 0H6.500v8H8zM0 0v8l5.500-4z"/></svg></button>
            <button class="w-[15px] flex items-center justify-center" aria-label="布局列表"><svg class="w-[7px] h-[7px]" viewBox="0 0 7 7"><path d="M.500.500h6v6h-6ZM2 2.500h3M2 4.500h3" fill="none" stroke="#000"/></svg></button>
            <button class="w-[34px] bg-[#ebebeb] font-bold">模型</button>
            <button class="w-[49px] border-r border-[#ddd]">A4横版</button>
            <button class="w-[49px] border-r border-[#ddd]">A4竖版</button>
            <button class="w-[49px] border-r border-[#ddd]">A3横版</button>
            <button class="w-[49px] border-r border-[#ddd]">A3竖版</button>
            <button class="w-[49px] border-r border-[#ddd]">A2横版</button>
            <button class="w-[49px] border-r border-[#ddd]">A2竖版</button>
            <button class="w-[49px] border-r border-[#ddd]">A1横版</button>
            <button class="w-[49px] border-r border-[#ddd]">A1竖版</button>
            <button class="w-[49px] border-r border-[#ddd]">A0横版</button>
            <button class="w-[49px] border-r border-[#ddd]">A0竖版</button>
            <button class="w-4 border-r border-[#ddd]">+</button>
        </div>
    </main>
</div>

<!-- Barra de estado -->
<footer class="h-[15px] shrink-0 bg-white flex text-xs leading-[18px] whitespace-nowrap overflow-hidden text-center text-[#444]">
    <span class="w-[352px] text-left -indent-0.5">就绪</span>
    <span class="w-[146px] border-l border-[#ccc] pr-[5px] text-right">-24.22, 35.89, 0</span>
    <span class="w-24 border-l border-[#ccc]">PC_TEXTSTYLE</span>
    <span class="w-[67px] border-l border-[#ccc]">TH_GBDIM</span>
    <span class="w-[47px] border-l border-[#ccc]">3D机械</span>
    <button class="w-[41px] border-l border-[#ccc] text-[#b5b5b5]">SNAP</button>
    <button class="w-[39px] border-l border-[#ccc] text-[#b5b5b5]">GRID</button>
    <button class="w-8 border-l border-[#ccc] text-[#b5b5b5]">正交</button>
    <button class="w-11 border-l border-[#ccc] px-[3px]"><span class="block bg-[#d3d3d3]">极坐标</span></button>
    <button class="w-14 border-l border-[#ccc] px-[3px]"><span class="block bg-[#d3d3d3]">对象捕捉</span></button>
    <button class="w-8 border-l border-[#ccc] px-[3px]"><span class="block bg-[#d3d3d3]">追踪</span></button>
    <button class="w-[33px] border-l border-[#ccc] text-[#b5b5b5]">线宽</button>
    <button class="w-8 border-l border-[#ccc]">TILE</button>
    <button class="w-[26px] border-l border-[#ccc]">1:1</button>
    <button class="w-[38px] border-l border-[#ccc] px-[3px]"><span class="block bg-[#d3d3d3]">DUCS</span></button>
    <button class="w-8 border-l border-[#ccc] px-[3px]"><span class="block bg-[#d3d3d3]">DYN</span></button>
    <button class="w-[41px] border-l border-[#ccc] px-[3px]"><span class="block bg-[#d3d3d3]">QUAD</span></button>
    <button class="w-[43px] border-l border-[#ccc] px-[3px]"><span class="block bg-[#d3d3d3]">候选物</span></button>
    <button class="w-8 border-l border-[#ccc] text-[#b5b5b5]">HKA</button>
    <button class="w-[49px] border-l border-[#ccc] text-[#b5b5b5]">LOCKUI</button>
    <span class="w-[19px] border-l border-[#ccc]">无</span>
    <button class="border-l border-[#ccc] pl-0.5" aria-label="通知"><svg class="w-4 h-[15px]" viewBox="0 0 16 15"><path d="M1 4q3-3 9-3 5 1 4 6l-3 3H8Q6 7 1 6Z" fill="#fff" stroke="#000" stroke-width="1.600"/><path d="M1 4q4 2 6 6M7 2v5" fill="none" stroke="#1020d0" stroke-width="2"/><circle cx="12" cy="5" r="1.200" fill="#d00"/><path d="M10 12h6v3h-6Z" fill="#d81010"/></svg></button>
    <button class="ml-[13px] pt-1" aria-label="状态栏菜单"><svg class="w-[7px] h-1" viewBox="0 0 7 4"><path d="M0 0h7L3.500 4z"/></svg></button>
</footer>
</body>
</html>
